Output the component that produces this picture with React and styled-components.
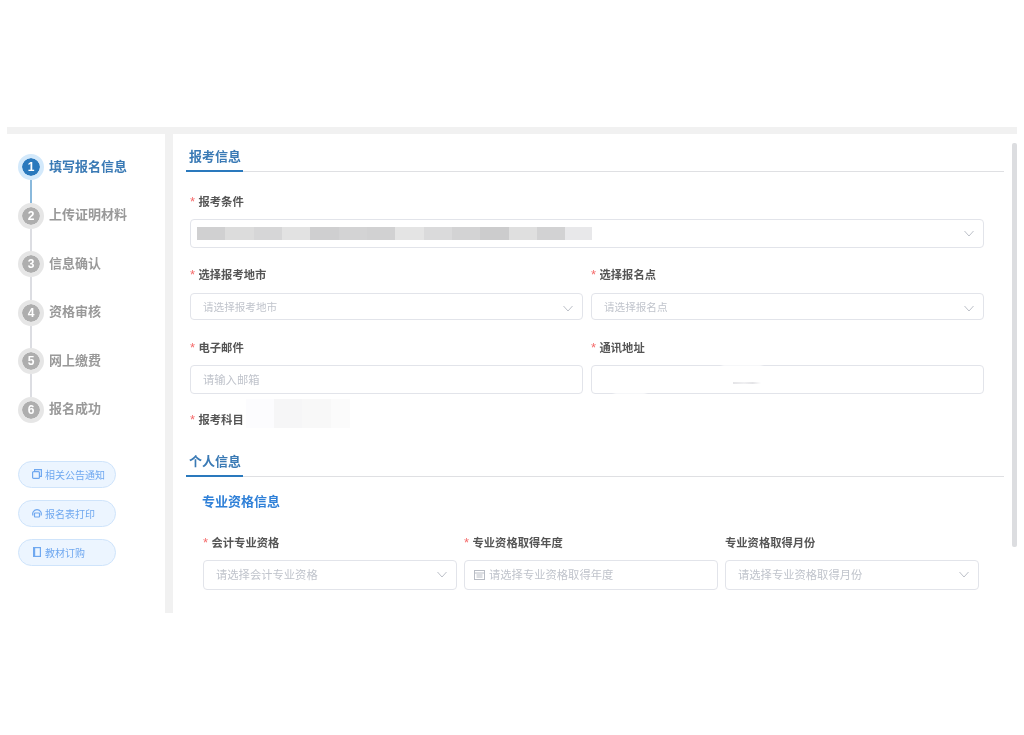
import styled, { createGlobalStyle } from 'styled-components';

const GlobalStyle = createGlobalStyle`
  html, body {
    margin: 0;
    padding: 0;
    background: #fff;
  }
  body {
    font-family: "Noto Sans CJK SC", "Liberation Sans", sans-serif;
  }
`;

const Page = styled.div`
  width: 1024px;
  height: 735px;
  padding: 127px 7px 0;
  box-sizing: border-box;
  filter: blur(0.4px);
`;

const Frame = styled.div`
  display: flex;
  gap: 8px;
  height: 486px;
  padding-top: 7px;
  box-sizing: border-box;
  background: #f1f1f1;
`;

const Sidebar = styled.aside`
  width: 158px;
  flex: none;
  padding: 20px 0 0 11px;
  box-sizing: border-box;
  background: #fff;
`;

const Steps = styled.div`
  display: flex;
  flex-direction: column;
`;

const Step = styled.div`
  position: relative;
  display: flex;
  align-items: center;
  gap: 5px;
  height: 26px;
  margin-bottom: 22.6px;

  &:not(:last-child)::after {
    content: '';
    position: absolute;
    left: 12px;
    top: 26px;
    width: 2px;
    height: 23px;
    background: ${(p) => (p.$active ? '#8ab9dc' : '#dcdde2')};
  }
`;

const StepDot = styled.div`
  width: 18px;
  height: 18px;
  flex: none;
  display: flex;
  align-items: center;
  justify-content: center;
  border-radius: 50%;
  border: 4px solid ${(p) => (p.$active ? '#d3e9fb' : '#e6e6e6')};
  background: ${(p) => (p.$active ? '#2a79bd' : '#aeaeae')};
  background-clip: padding-box;
  color: #fff;
  font-family: "Liberation Sans", sans-serif;
  font-size: 12px;
  font-weight: 700;
`;

const StepName = styled.span`
  padding-bottom: 4px;
  font-size: 13px;
  font-weight: 700;
  color: ${(p) => (p.$active ? '#3a7ab5' : '#999999')};
`;

const Links = styled.div`
  display: flex;
  flex-direction: column;
  gap: 12px;
  margin-top: 15px;
`;

const LinkButton = styled.div`
  display: flex;
  align-items: center;
  gap: 3px;
  width: 98px;
  height: 27px;
  padding-left: 13px;
  box-sizing: border-box;
  border: 1px solid #cfe4fb;
  border-radius: 14px;
  background: #ecf5ff;
  color: #6fa8f0;
  font-size: 10px;
`;

const Main = styled.main`
  position: relative;
  flex: 1;
  padding: 12px 13px 0 13px;
  box-sizing: border-box;
  background: #fff;
  overflow: hidden;
`;

const Scrollbar = styled.div`
  position: absolute;
  right: 0;
  top: 9px;
  width: 5px;
  height: 404px;
  border-radius: 2px;
  background: #dcdde0;
`;

const SectionHead = styled.div`
  width: 818px;
  height: 26px;
  margin-top: ${(p) => p.$top || 0}px;
  box-sizing: border-box;
  border-bottom: 1px solid #dfe0e3;
`;

const SectionTitle = styled.span`
  display: block;
  height: 26px;
  width: 57px;
  padding-left: 3px;
  box-sizing: border-box;
  border-bottom: 2px solid #2a79bd;
  color: #3a7ab5;
  font-size: 13px;
  font-weight: 700;
  line-height: 20px;
`;

const Form = styled.div`
  width: 794px;
  margin-left: 4px;
  display: flex;
  flex-direction: column;
`;

const Label = styled.label`
  display: block;
  height: 18px;
  color: #555;
  font-size: 11.3px;
  font-weight: 700;
  line-height: 18px;
  white-space: nowrap;

  ${(p) => p.$required && `
    &::before {
      content: '*';
      display: inline-block;
      width: 8.5px;
      color: #f56c6c;
      font-family: "Liberation Sans", sans-serif;
      font-size: 13px;
      font-weight: 400;
      line-height: 14px;
    }
  `}
`;

const Row = styled.div`
  display: grid;
  grid-template-columns: repeat(2, 393px);
  gap: 8px;
`;

const Field = styled.div`
  margin-top: ${(p) => p.$top || 0}px;
`;

const Control = styled.div`
  position: relative;
  display: flex;
  align-items: center;
  height: ${(p) => p.$h || 29}px;
  margin-top: ${(p) => p.$gap || 9}px;
  padding: 0 12px ${(p) => (p.$lift ? 2 : 0)}px;
  box-sizing: border-box;
  border: 1px solid #e2e4ea;
  border-radius: 4px;
  background: #fff;
  color: #c0c4cc;
  font-size: ${(p) => p.$fs || 11.3}px;
`;

const Chevron = styled.svg`
  position: absolute;
  right: 9px;
  top: 50%;
  margin-top: ${(p) => p.$offset || -4}px;
  width: 10px;
  height: 7px;
  fill: none;
  stroke: #bcc0c8;
  stroke-width: 1;
`;

const Mosaic = styled.div`
  display: flex;
  flex: none;
  width: ${(p) => p.$w}px;
  height: ${(p) => p.$h}px;
  margin-left: ${(p) => p.$left || 0}px;
  overflow: hidden;
`;

const Cell = styled.div`
  flex: none;
  width: 28.33px;
  height: 100%;
  background: ${(p) => p.$c};
`;

const SubjectRow = styled.div`
  display: flex;
  align-items: flex-end;
  gap: 2px;
  margin-top: 5px;
`;

const SubTitle = styled.div`
  margin: 14px 0 0 16px;
  color: #2f80d8;
  font-size: 13px;
  font-weight: 700;
  line-height: 20px;
`;

const Triple = styled.div`
  display: grid;
  grid-template-columns: repeat(3, 254px);
  gap: 7px;
  margin: 22px 0 0 17px;
`;

const DateIcon = styled.svg`
  width: 11px;
  height: 11px;
  flex: none;
  margin-right: 4px;
  margin-left: -3px;
  fill: none;
  stroke: #b8bcc4;
`;

const AddressSmudge = styled.div`
  position: absolute;
  left: 141px;
  top: 16px;
  width: 28px;
  height: 2px;
  background: linear-gradient(90deg, #e4e4e7, #f0f0f2 40%, #e4e4e7 70%, #fff);
  filter: blur(0.6px);
`;

const AddressWash = styled.div`
  position: absolute;
  left: ${(p) => p.$left}px;
  ${(p) => p.$side}: -2px;
  width: ${(p) => p.$w}px;
  height: 3px;
  background: #fff;
  filter: blur(1.5px);
`;

const ChevronDown = ({ offset }) => (
  <Chevron viewBox="0 0 10 7" $offset={offset}>
    <path d="M0.5 1 L5 6 L9.5 1" />
  </Chevron>
);

const stepNames = ['填写报名信息', '上传证明材料', '信息确认', '资格审核', '网上缴费', '报名成功'];

const conditionCells = [
  '#d0d0d1', '#dcdcdc', '#d6d6d7', '#e2e2e2', '#cfcfd0', '#d3d3d4', '#d1d1d2',
  '#e4e4e4', '#dadadb', '#d3d3d4', '#cccccd', '#dfdfdf', '#d2d2d3', '#e8e8ea',
];

const subjectCells = ['#fcfcfe', '#f6f6f7', '#f8f8f8', '#fbfbfb'];

const NoticeIcon = () => (
  <svg width="10" height="10" viewBox="0 0 10 10" fill="none" stroke="#6fa8f0" strokeWidth="1.2">
    <rect x="0.6" y="2.6" width="6.8" height="6.8" rx="1" />
    <path d="M2.6 2.6 V0.6 H9.4 V7.4 H7.4" />
  </svg>
);

const PrintIcon = () => (
  <svg width="10" height="10" viewBox="0 0 10 10" fill="none" stroke="#6fa8f0" strokeWidth="1.2">
    <path d="M1 7.5 A4.3 4.3 0 1 1 9 7.5" />
    <rect x="2.5" y="5" width="5" height="4" rx="0.5" />
  </svg>
);

const BookIcon = () => (
  <svg width="10" height="10" viewBox="0 0 10 10" fill="none" stroke="#6fa8f0" strokeWidth="1.2">
    <rect x="1.6" y="0.6" width="6.8" height="8.8" />
    <path d="M2.6 1 V9" />
  </svg>
);

const App = () => (
  <Page>
    <GlobalStyle />
    <Frame>
      <Sidebar>
        <Steps>
          {stepNames.map((name, i) => (
            <Step key={name} $active={i === 0}>
              <StepDot $active={i === 0}>{i + 1}</StepDot>
              <StepName $active={i === 0}>{name}</StepName>
            </Step>
          ))}
        </Steps>
        <Links>
          <LinkButton><NoticeIcon />相关公告通知</LinkButton>
          <LinkButton><PrintIcon />报名表打印</LinkButton>
          <LinkButton><BookIcon />教材订购</LinkButton>
        </Links>
      </Sidebar>
      <Main>
        <Scrollbar />
        <SectionHead><SectionTitle>报考信息</SectionTitle></SectionHead>
        <Form>
          <Field $top={20}>
            <Label $required>报考条件</Label>
            <Control>
              <Mosaic $w={395} $h={13} $left={-6}>
                {conditionCells.map((c, i) => <Cell key={i} $c={c} />)}
              </Mosaic>
              <ChevronDown />
            </Control>
          </Field>
          <Row>
            <Field $top={17}>
              <Label $required>选择报考地市</Label>
              <Control $h={27} $gap={10} $fs={10.6}>请选择报考地市<ChevronDown offset={-2} /></Control>
            </Field>
            <Field $top={17}>
              <Label $required>选择报名点</Label>
              <Control $h={27} $gap={10} $fs={10.6}>请选择报名点<ChevronDown offset={-2} /></Control>
            </Field>
          </Row>
          <Row>
            <Field $top={18}>
              <Label $required>电子邮件</Label>
              <Control $lift>请输入邮箱</Control>
            </Field>
            <Field $top={18}>
              <Label $required>通讯地址</Label>
              <Control>
                <AddressWash $side="top" $left={130} $w={40} />
                <AddressWash $side="bottom" $left={22} $w={32} />
                <AddressSmudge />
              </Control>
            </Field>
          </Row>
          <SubjectRow>
            <Label $required>报考科目</Label>
            <Mosaic $w={104} $h={29}>
              {subjectCells.map((c, i) => <Cell key={i} $c={c} />)}
            </Mosaic>
          </SubjectRow>
        </Form>
        <SectionHead $top={23}><SectionTitle>个人信息</SectionTitle></SectionHead>
        <SubTitle>专业资格信息</SubTitle>
        <Triple>
          <Field>
            <Label $required>会计专业资格</Label>
            <Control $h={30} $lift>请选择会计专业资格<ChevronDown /></Control>
          </Field>
          <Field>
            <Label $required>专业资格取得年度</Label>
            <Control $h={30} $lift>
              <DateIcon viewBox="0 0 11 11">
                <rect x="0.5" y="1.5" width="10" height="9" />
                <path d="M0.5 4 H10.5 M2.5 6 H8.5 M2.5 8 H8.5" />
              </DateIcon>
              请选择专业资格取得年度
            </Control>
          </Field>
          <Field>
            <Label>专业资格取得月份</Label>
            <Control $h={30} $lift>请选择专业资格取得月份<ChevronDown /></Control>
          </Field>
        </Triple>
      </Main>
    </Frame>
  </Page>
);

export default App;
